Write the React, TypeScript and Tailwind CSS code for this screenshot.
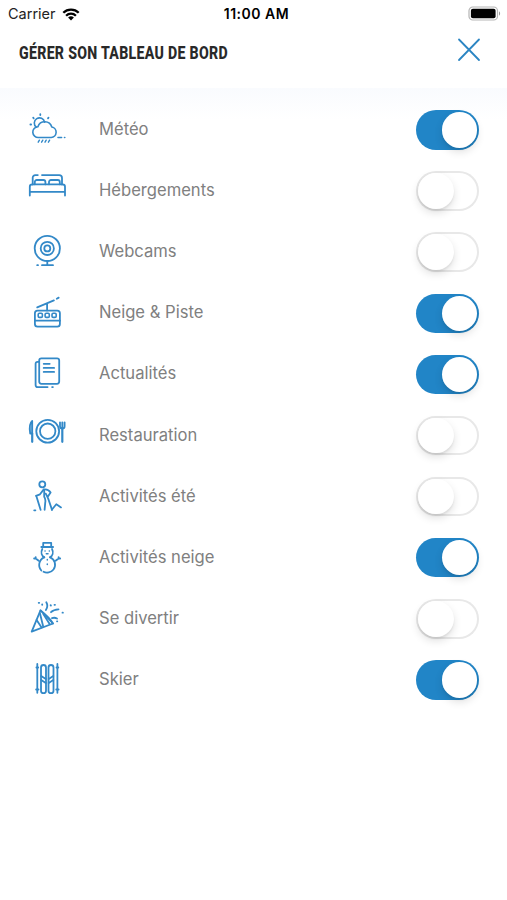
import React, { useState } from 'react';
import clsx from 'clsx';

type IconProps = { children: React.ReactNode };

const Icon: React.FC<IconProps> = ({ children }) => (
  <svg
    viewBox="0 0 60 50"
    className="h-[50px] w-[60px] shrink-0 text-[#3389c8]"
    fill="none"
    stroke="currentColor"
    strokeWidth={1.8}
    strokeLinecap="round"
    strokeLinejoin="round"
  >
    {children}
  </svg>
);

const WeatherIcon = () => (
  <Icon>
    <path d="M18.5 32.5h12.7a5.3 5.3 0 0 0 .6-10.5 7.3 7.3 0 0 0-13.9-.3 5.4 5.4 0 0 0 .6 10.8Z" strokeWidth="1.6" />
    <path d="M16.3 22.2a5.2 5.2 0 1 1 8.3-5.1" strokeWidth="1.6" />
    <path d="M20.3 9.2v.8M13.2 12.7l.5.6M28.5 12.7l-.5.6M10.4 19.5h.7" />
    <path d="M19.4 35.2l-1.2 2M22.8 35.2l-1.2 2M26.2 35.2l-1.2 2M29.6 35.2l-1.2 2" strokeWidth="1.4" />
    <path d="M38 32.5h3.6M44.5 32.5h.3" strokeWidth="1.6" />
  </Icon>
);

const BedIcon = () => (
  <Icon>
    <path d="M12.7 18.5V11.7a2.6 2.6 0 0 1 2.6-2.6h2.5M22 9.1h17.2a2.8 2.8 0 0 1 2.8 2.8v6.6" />
    <path d="M14.8 18.3V16c0-1.2.8-2 2-2h6.6c1.2 0 2 .8 2 2v2.3M29 18.3V16c0-1.2.8-2 2-2h6.8c1.2 0 2 .8 2 2v2.3" />
    <path d="M9.8 29.5v-8.7c0-1.4.9-2.4 2.4-2.4h30.4c1.5 0 2.4 1 2.4 2.4v8.7M10 25.8h35" />
  </Icon>
);

const WebcamIcon = () => (
  <Icon>
    <circle cx="27.3" cy="21.4" r="12.6" />
    <circle cx="27.3" cy="21.4" r="6.6" />
    <circle cx="27.3" cy="21.4" r="3" />
    <path d="M27.3 34v4M22 38.2h11M17.2 38.2h.8" />
  </Icon>
);

const CableCarIcon = () => (
  <Icon>
    <rect x="14.9" y="22.6" width="25" height="16" rx="2.6" />
    <path d="M15 32.7h25M27.1 15.8v6.6M17.2 19.4l16.7-7M36.8 10.7l1.9-1.1" />
    <rect x="18.2" y="25.2" width="4.2" height="4.2" rx="1.2" strokeWidth="1.6" />
    <rect x="25.1" y="25.2" width="4.2" height="4.2" rx="1.2" strokeWidth="1.6" />
    <rect x="32" y="25.2" width="4.2" height="4.2" rx="1.2" strokeWidth="1.6" />
  </Icon>
);

const NewsIcon = () => (
  <Icon>
    <rect x="19.2" y="9.3" width="20" height="25.5" rx="2.2" />
    <path d="M19 12.8h-1.4c-1.3 0-2 .8-2 2v21.1c0 1.4.8 2.2 2.2 2.2h9.8M32.1 38.1h.8" />
    <path d="M23.7 14.8h6M23.7 18.9h10.4M23.7 22.9h10.4" />
  </Icon>
);

const RestaurantIcon = () => (
  <Icon>
    <circle cx="27.7" cy="20.2" r="11.4" />
    <circle cx="27.7" cy="20.2" r="7.7" />
    <path d="M12.2 9.9c-2.3 2-2.9 7.6-2 12.6h2Z" fill="currentColor" fillOpacity="0.5" />
    <path d="M12.2 22.5v8.3" strokeWidth="2.2" />
    <path d="M40 11.3v4c0 1.6.9 2.4 2.3 2.4s2.3-.8 2.3-2.4v-4M42.3 11.3v6" />
    <path d="M42.3 17.5v13.3" strokeWidth="2.2" />
  </Icon>
);

const HikerIcon = () => (
  <Icon>
    <circle cx="22.3" cy="12.3" r="3" />
    <path d="M23.6 17.6l-3.6 4.7-4 1.6M16.4 24.2l4.2 13.6" />
    <path d="M23.8 17.5c2.8-.4 5.4.7 6.8 3l-3 4.4M25.8 21.6l2.4 5 3.8 11.2" />
    <path d="M24.2 18.2v6.6c1.3 2 1.5 3.8 1 6l-.6 7" />
    <path d="M14.2 38.3h1.2M31.8 37.7l4.5-5.5 1.9 1.2 2.8 2" />
  </Icon>
);

const SnowmanIcon = () => (
  <Icon>
    <path d="M23.2 13.7V9.8h8v3.9M21.3 14h11.8" />
    <path d="M22.3 16c-1.8 3.5-.5 6.8 2 8.3M32 16c1.8 3.5.5 6.8-2 8.3" />
    <path d="M24.3 24.3a8.3 8.3 0 0 0-3 13.2M23.5 38.8c3 1.4 7.5.9 10-2.3 3.2-4.2 1.3-10.5-3.4-12.2" />
    <path d="M18.7 27.8l-3-2.3v-1.4M15.7 25.5h-1.6M35.6 27.8l3-2.3v-1.4M38.6 25.5h1.6" />
    <path d="M25 18h.1M29.3 18h.1M26.3 20.8h1.7M27.3 26.5v.5M27.3 31v.5" strokeWidth="1.5" />
  </Icon>
);

const PartyIcon = () => (
  <Icon>
    <path d="M20.5 16.4L11.7 37.7l21.3-8.2Z" />
    <path d="M20.5 16.4c3.2 2.5 10 8.7 12.5 13.1M16.6 26l5 7.5M20 19.5l3.2 13M23.3 20l6.3 10" />
    <path d="M26.3 8.3c1.6 2.7 1.3 5.2-.4 7.8M31 18.2c1.7-1.8 4.2-2.8 7.5-2.9M32 24.2c2-.8 3.4-.5 5 .3" />
    <path d="M18.7 8.8h.5M22.2 10.3v.5M30.6 11.2l.3.3M34.5 10.8h.5M42.5 18.7h.4M37 27.3h.3" strokeWidth="1.8" />
  </Icon>
);

const SkiIcon = () => (
  <Icon>
    <rect x="21" y="10" width="5" height="28.2" rx="2.5" />
    <rect x="28.5" y="10" width="5" height="28.2" rx="2.5" />
    <path d="M21.2 21l4.6 3M21.2 25l4.6 3M33.3 21l-4.6 3M33.3 25l-4.6 3" />
    <path d="M17.3 9v28.8M37.4 9v28.8" />
    <path d="M16.5 12.5h1.6M36.6 12.5h1.6M16.2 34.6h2.2M36.3 34.6h2.2" strokeWidth="2" />
  </Icon>
);

const items = [
  { label: 'Météo', icon: WeatherIcon, enabled: true },
  { label: 'Hébergements', icon: BedIcon, enabled: false },
  { label: 'Webcams', icon: WebcamIcon, enabled: false },
  { label: 'Neige & Piste', icon: CableCarIcon, enabled: true },
  { label: 'Actualités', icon: NewsIcon, enabled: true },
  { label: 'Restauration', icon: RestaurantIcon, enabled: false },
  { label: 'Activités été', icon: HikerIcon, enabled: false },
  { label: 'Activités neige', icon: SnowmanIcon, enabled: true },
  { label: 'Se divertir', icon: PartyIcon, enabled: false },
  { label: 'Skier', icon: SkiIcon, enabled: true },
];

const Toggle: React.FC<{ label: string; initial: boolean }> = ({ label, initial }) => {
  const [on, setOn] = useState(initial);

  return (
    <button
      type="button"
      role="switch"
      aria-checked={on}
      aria-label={label}
      onClick={() => setOn(!on)}
      className={clsx(
        'flex h-[39.5px] w-[63px] items-center rounded-full p-[2px]',
        on ? 'justify-end bg-[#2185c7]' : 'justify-start bg-white ring-2 ring-inset ring-[#e8e8e8]',
      )}
    >
      <span className="size-[35.5px] rounded-full bg-white shadow-[0_4px_8px_rgba(0,0,0,0.12),0_2px_2px_rgba(0,0,0,0.06)]" />
    </button>
  );
};

const StatusBar = () => (
  <div className="grid h-7 grid-cols-3 items-center pl-2 pr-[6px] text-black">
    <div className="flex items-center gap-[6px]">
      <span className="text-[14.5px] leading-none text-[#222]">Carrier</span>
      <svg viewBox="0 0 18 13" className="h-[13px] w-[18px]" fill="none" stroke="currentColor" strokeWidth="2.3">
        <path d="M1.3 4.7a11 11 0 0 1 15.4 0M4.1 7.7a7 7 0 0 1 9.8 0" />
        <path d="M9 12.4L6.1 9.6a4.2 4.2 0 0 1 5.8 0Z" fill="currentColor" stroke="none" />
      </svg>
    </div>
    <span className="whitespace-nowrap pl-[4px] text-center text-[14px] font-semibold leading-none tracking-[0.5px]">
      11:00 AM
    </span>
    <svg viewBox="0 0 33 15" className="h-[15px] w-[33px] -translate-y-px justify-self-end" fill="none">
      <rect x="1" y="1" width="28.5" height="13" rx="3.8" stroke="#b5b5b5" strokeWidth="1.2" />
      <rect x="2.9" y="2.8" width="24.7" height="9.4" rx="2" fill="#000" />
      <path d="M31 5.3c1.5.7 1.5 3.7 0 4.4Z" fill="#999" />
    </svg>
  </div>
);

export default function App() {
  return (
    <div className="flex h-[900px] w-[507px] flex-col overflow-hidden bg-white font-['Inter',sans-serif]">
      <StatusBar />

      <header className="flex h-[60px] shrink-0 items-start justify-between pl-[19px] pr-[26px]">
        <h1 className="mt-[13px] w-[212px] origin-left scale-x-[0.745] whitespace-nowrap font-['Roboto',sans-serif] text-[19px] font-extrabold leading-6 tracking-[0.4px] text-[#292929]">
          GÉRER SON TABLEAU DE BORD
        </h1>
        <button type="button" aria-label="Fermer" className="mt-[10px] text-[#2b85c3]">
          <svg viewBox="0 0 24 24" className="size-6" fill="none" stroke="currentColor" strokeWidth="1.8" strokeLinecap="round">
            <path d="M2 1.5l20 20.5M22 1.5L2 22" />
          </svg>
        </button>
      </header>

      <main className="bg-linear-to-b from-[#f9fbfe] from-0% to-white to-[32px] pt-[11.5px]">
        {items.map(({ label, icon: ItemIcon, enabled }) => (
          <div key={label} className="flex h-[61.1px] items-center pl-5 pr-[28px]">
            <ItemIcon />
            <span className="mb-[2px] ml-[19px] flex-1 text-[16.6px] leading-6 text-[#808080]">{label}</span>
            <Toggle label={label} initial={enabled} />
          </div>
        ))}
      </main>
    </div>
  );
}
